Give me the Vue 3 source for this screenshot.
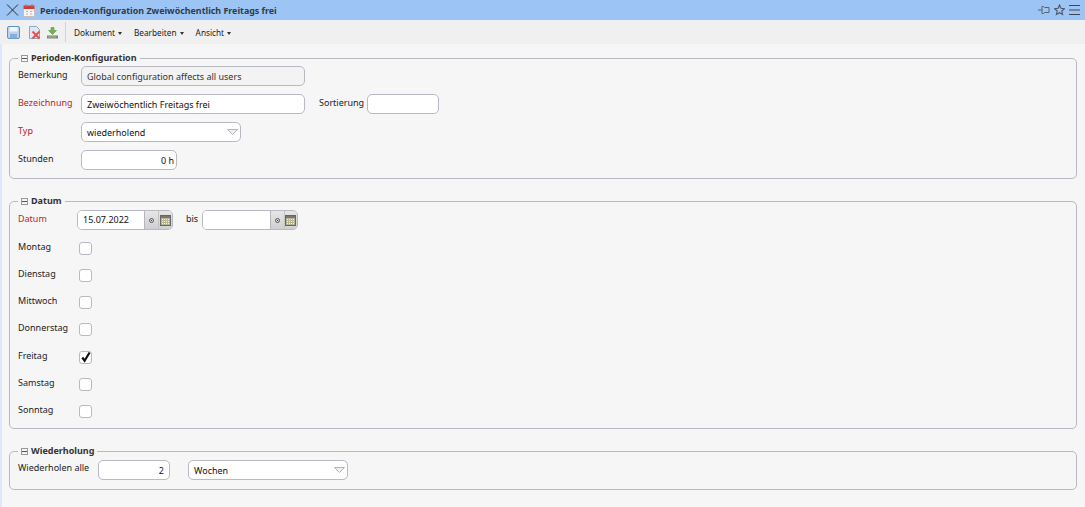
<script setup>
const days = [
  { name: 'Montag', on: false }, { name: 'Dienstag', on: false }, { name: 'Mittwoch', on: false },
  { name: 'Donnerstag', on: false }, { name: 'Freitag', on: true }, { name: 'Samstag', on: false }, { name: 'Sonntag', on: false }
]
</script>

<template>
  <div class="page">
    <header class="title">
      <svg class="close" width="13" height="14" viewBox="0 0 13 14"><path d="M1 1.500l11 11M12 1.500l-11 11" stroke="#2b2b2b" stroke-width="1" fill="none"/></svg>
      <svg class="cal" width="12" height="13" viewBox="0 0 12 13"><rect x="0.500" y="1.500" width="11" height="11" rx="1" fill="#f7f5f2" stroke="#c9bcbc"/><rect x="0.500" y="1.500" width="11" height="3.500" fill="#d63a36"/><path d="M3 0v3M9 0v3" stroke="#8a7f7f"/><path d="M3 7.500h2M7 7.500h2M3 10h2M7 10h2" stroke="#b5b0b0"/></svg>
      <span class="title-text">Perioden-Konfiguration Zweiwöchentlich Freitags frei</span>
      <span class="title-icons">
        <svg width="12" height="12" viewBox="0 0 12 12"><path d="M0 6h4M4 2.500h1.500l1 1h4.500v5H6.500l-1 1H4z" fill="none" stroke="#56616f"/></svg>
        <svg width="11" height="12" viewBox="0 0 11 12"><path d="M5.500 1l1.400 3.300 3.500.4-2.600 2.300.8 3.500-3.100-1.800-3.100 1.800.8-3.500L.6 4.700l3.500-.4z" fill="none" stroke="#4c5766" stroke-width="1.100"/></svg>
        <svg width="11" height="12" viewBox="0 0 11 12"><path d="M0 1.500h11M0 6h11M0 10.500h11" stroke="#3f4650" stroke-width="1.200"/></svg>
      </span>
    </header>

    <nav class="toolbar">
      <svg class="t1" width="13" height="13" viewBox="0 0 13 13"><rect x="0.500" y="0.500" width="12" height="12" rx="1.500" fill="#b9d3ee" stroke="#5f93c8"/><rect x="2.500" y="1" width="8" height="4.500" fill="#f1f6fb"/><rect x="3" y="8" width="7" height="4.500" fill="#86aed6"/></svg>
      <svg class="t2" width="13" height="13" viewBox="0 0 13 13"><path d="M1.500.5h7l3 3v9h-10z" fill="#dfe9f5" stroke="#8ba7c7"/><path d="M4.500 5.500l7 7M11.500 5.500l-7 7" stroke="#e8504a" stroke-width="2"/></svg>
      <svg class="t3" width="13" height="13" viewBox="0 0 13 13"><path d="M5 1.500h3v3h2.500l-4 4-4-4H5z" fill="#72b356" stroke="#5d9645" stroke-width=".6"/><rect x="1" y="9.500" width="11" height="3" fill="#7f8475"/><path d="M2.500 11h8" stroke="#ddd" stroke-dasharray="1 1"/></svg>
      <span class="sep"></span>
      <button class="menu">Dokument<i></i></button>
      <button class="menu">Bearbeiten<i></i></button>
      <button class="menu">Ansicht<i></i></button>
    </nav>

    <main class="content">
      <fieldset class="group first">
        <legend><span class="minus"></span>Perioden-Konfiguration</legend>
        <div class="row">
          <label class="lab w63">Bemerkung</label>
          <div class="field ro w224">Global configuration affects all users</div>
        </div>
        <div class="row">
          <label class="lab w63 req">Bezeichnung</label>
          <div class="field w224">Zweiwöchentlich Freitags frei</div>
          <label class="lab sort">Sortierung</label>
          <div class="field w72"></div>
        </div>
        <div class="row">
          <label class="lab w63 req">Typ</label>
          <div class="field select w160">wiederholend
            <svg class="tri" width="11" height="6" viewBox="0 0 11 6"><path d="M.5.500h10L5.500 5.500z" fill="#f0f0f3" stroke="#b4b4bd"/></svg>
          </div>
        </div>
        <div class="row">
          <label class="lab w63">Stunden</label>
          <div class="field right w96">0 h</div>
        </div>
      </fieldset>

      <fieldset class="group second">
        <legend><span class="minus"></span>Datum</legend>
        <div class="row">
          <label class="lab w59 req">Datum</label>
          <div class="date">
            <div class="date-in">15.07.2022</div>
            <span class="date-btn"><span class="dot"></span></span>
            <span class="date-btn cal-btn"><span class="grid"></span></span>
          </div>
          <label class="lab bis">bis</label>
          <div class="date">
            <div class="date-in long"></div>
            <span class="date-btn"><span class="dot"></span></span>
            <span class="date-btn cal-btn"><span class="grid"></span></span>
          </div>
        </div>
        <div class="days">
          <div v-for="d in days" :key="d.name" class="day">
            <label class="lab w61">{{ d.name }}</label>
            <span class="check">
              <svg v-if="d.on" width="12" height="13" viewBox="0 0 12 13"><path d="M2.300 6.500l2.300 3.200L9.600 1.500" fill="none" stroke="#111" stroke-width="2.200"/></svg>
            </span>
          </div>
        </div>
      </fieldset>

      <fieldset class="group third">
        <legend><span class="minus"></span>Wiederholung</legend>
        <div class="row">
          <label class="lab rep">Wiederholen alle</label>
          <div class="field right w72b">2</div>
          <div class="field select w160b">Wochen
            <svg class="tri" width="11" height="6" viewBox="0 0 11 6"><path d="M.5.500h10L5.500 5.500z" fill="#f0f0f3" stroke="#b4b4bd"/></svg>
          </div>
        </div>
      </fieldset>
    </main>
  </div>
</template>

<style>
html, body { margin: 0; background: #f6f6f6; }
</style>

<style scoped>
.page { width: 1085px; height: 507px; overflow: hidden; font-family: "Noto Sans", Tahoma, sans-serif; font-size: 9px; color: #222; background: #f6f6f6; }
.title { height: 20px; background: #9cc5f6; display: flex; align-items: center; padding: 0 5px 0 6px; box-sizing: border-box; }
.cal { margin-left: 4px; }
.title-text { margin-left: 5px; font-weight: 700; font-size: 8.900px; color: #333a45; }
.title-icons { margin-left: auto; display: flex; gap: 4px; align-items: center; }
.toolbar { height: 24px; background: #f0f0f0; display: flex; align-items: center; padding-left: 7px; box-sizing: border-box; }
.t2 { margin-left: 8px; }
.t3 { margin-left: 5px; }
.sep { width: 1px; height: 20px; background: #d4d4d4; margin: 0 8px 0 6px; }
.menu { all: unset; font-size: 8.250px; color: #222; margin-right: 12px; }
.menu i { display: inline-block; margin-left: 3px; vertical-align: middle; border: 2.500px solid transparent; border-top: 3px solid #333; border-bottom: 0; }
.content { padding: 8px 8px 0 7px; border-left: 2px solid #dbe9fb; margin: 0; height: 463px; box-sizing: border-box; }
.group { border: 1px solid #b9b9c4; border-radius: 5px; margin: 0; padding: 0 8px; min-width: 0; box-sizing: border-box; }
.first { height: 127px; }
.first .row:first-of-type { margin-top: 2px; }
.second { height: 234px; margin-top: 16px; }
.second > .row { margin-top: 3px; }
.third { height: 45px; margin-top: 16px; }
legend { padding: 0 3px; margin-left: 0; font-weight: 700; font-size: 9px; line-height: 12px; color: #333; display: flex; align-items: center; }
.minus { width: 5px; height: 5px; border: 1px solid #999; background: linear-gradient(#555,#555) center/5px 1px no-repeat #f6f6f6; margin-right: 3px; box-sizing: content-box; }
.row { display: flex; align-items: center; height: 20px; margin-bottom: 8px; }
.lab { white-space: nowrap; position: relative; top: -2px; }
.req { color: #c0232c; }
.w63 { width: 63px; }
.w59 { width: 59px; }
.w61 { width: 61px; }
.field { height: 20px; box-sizing: border-box; border: 1px solid #b9b9c4; border-radius: 5px; background: #fff; padding: 0 5px; line-height: 19px; color: #111; position: relative; }
.ro { background: #f3f3f3; color: #333; }
.w224 { width: 224px; }
.w72 { width: 72px; }
.w160 { width: 160px; }
.w96 { width: 96px; }
.right { text-align: right; padding-right: 2px; }
.sort { margin-left: 14px; width: 48px; }
.tri { position: absolute; right: 2px; top: 6px; }
.date { display: flex; width: 96px; height: 20px; box-sizing: border-box; border: 1px solid #b9b9c4; border-radius: 5px; overflow: hidden; background: #e4e4e4; }
.date-in { width: 67px; background: #fff; line-height: 18px; padding-left: 5px; color: #111; box-sizing: border-box; border-right: 1px solid #b5b5c0; flex: none; }
.date-in.long { width: 68px; }
.date-btn { flex: 1; display: flex; align-items: center; justify-content: center; background: linear-gradient(#e6e6e6,#cfcfd2); }
.cal-btn { border-left: 1px solid #c4c4c4; box-sizing: border-box; }
.dot { width: 5px; height: 5px; border: 1px solid #555; border-radius: 50%; box-sizing: border-box; background: radial-gradient(#333 35%, #ddd 40%); }
.grid { width: 11px; height: 11px; flex: none; border: 1px solid #666; box-sizing: border-box; background: linear-gradient(#777 0 2px, transparent 2px), repeating-linear-gradient(90deg,#b9b48f 0 1px,transparent 1px 2px), repeating-linear-gradient(0deg,#b9b48f 0 1px,#f4f1da 1px 2px); }
.bis { margin-left: 13px; width: 16px; }
.days { margin-top: -4px; }
.day { display: flex; align-items: center; height: 27.150px; }
.day .lab { top: -1px; }
.check { width: 13px; height: 13px; box-sizing: border-box; border: 1px solid #b9b9c4; border-radius: 3px; background: #fff; display: flex; align-items: center; justify-content: center; position: relative; top: 1px; }
.check svg { flex: none; }
.rep { width: 80px; top: -3px; }
.third .row { margin: 3px 0 0; }
.third .field { line-height: 20px; }
.w72b { width: 72px; padding-right: 5px; }
.w160b { width: 160px; margin-left: 18px; }
</style>
